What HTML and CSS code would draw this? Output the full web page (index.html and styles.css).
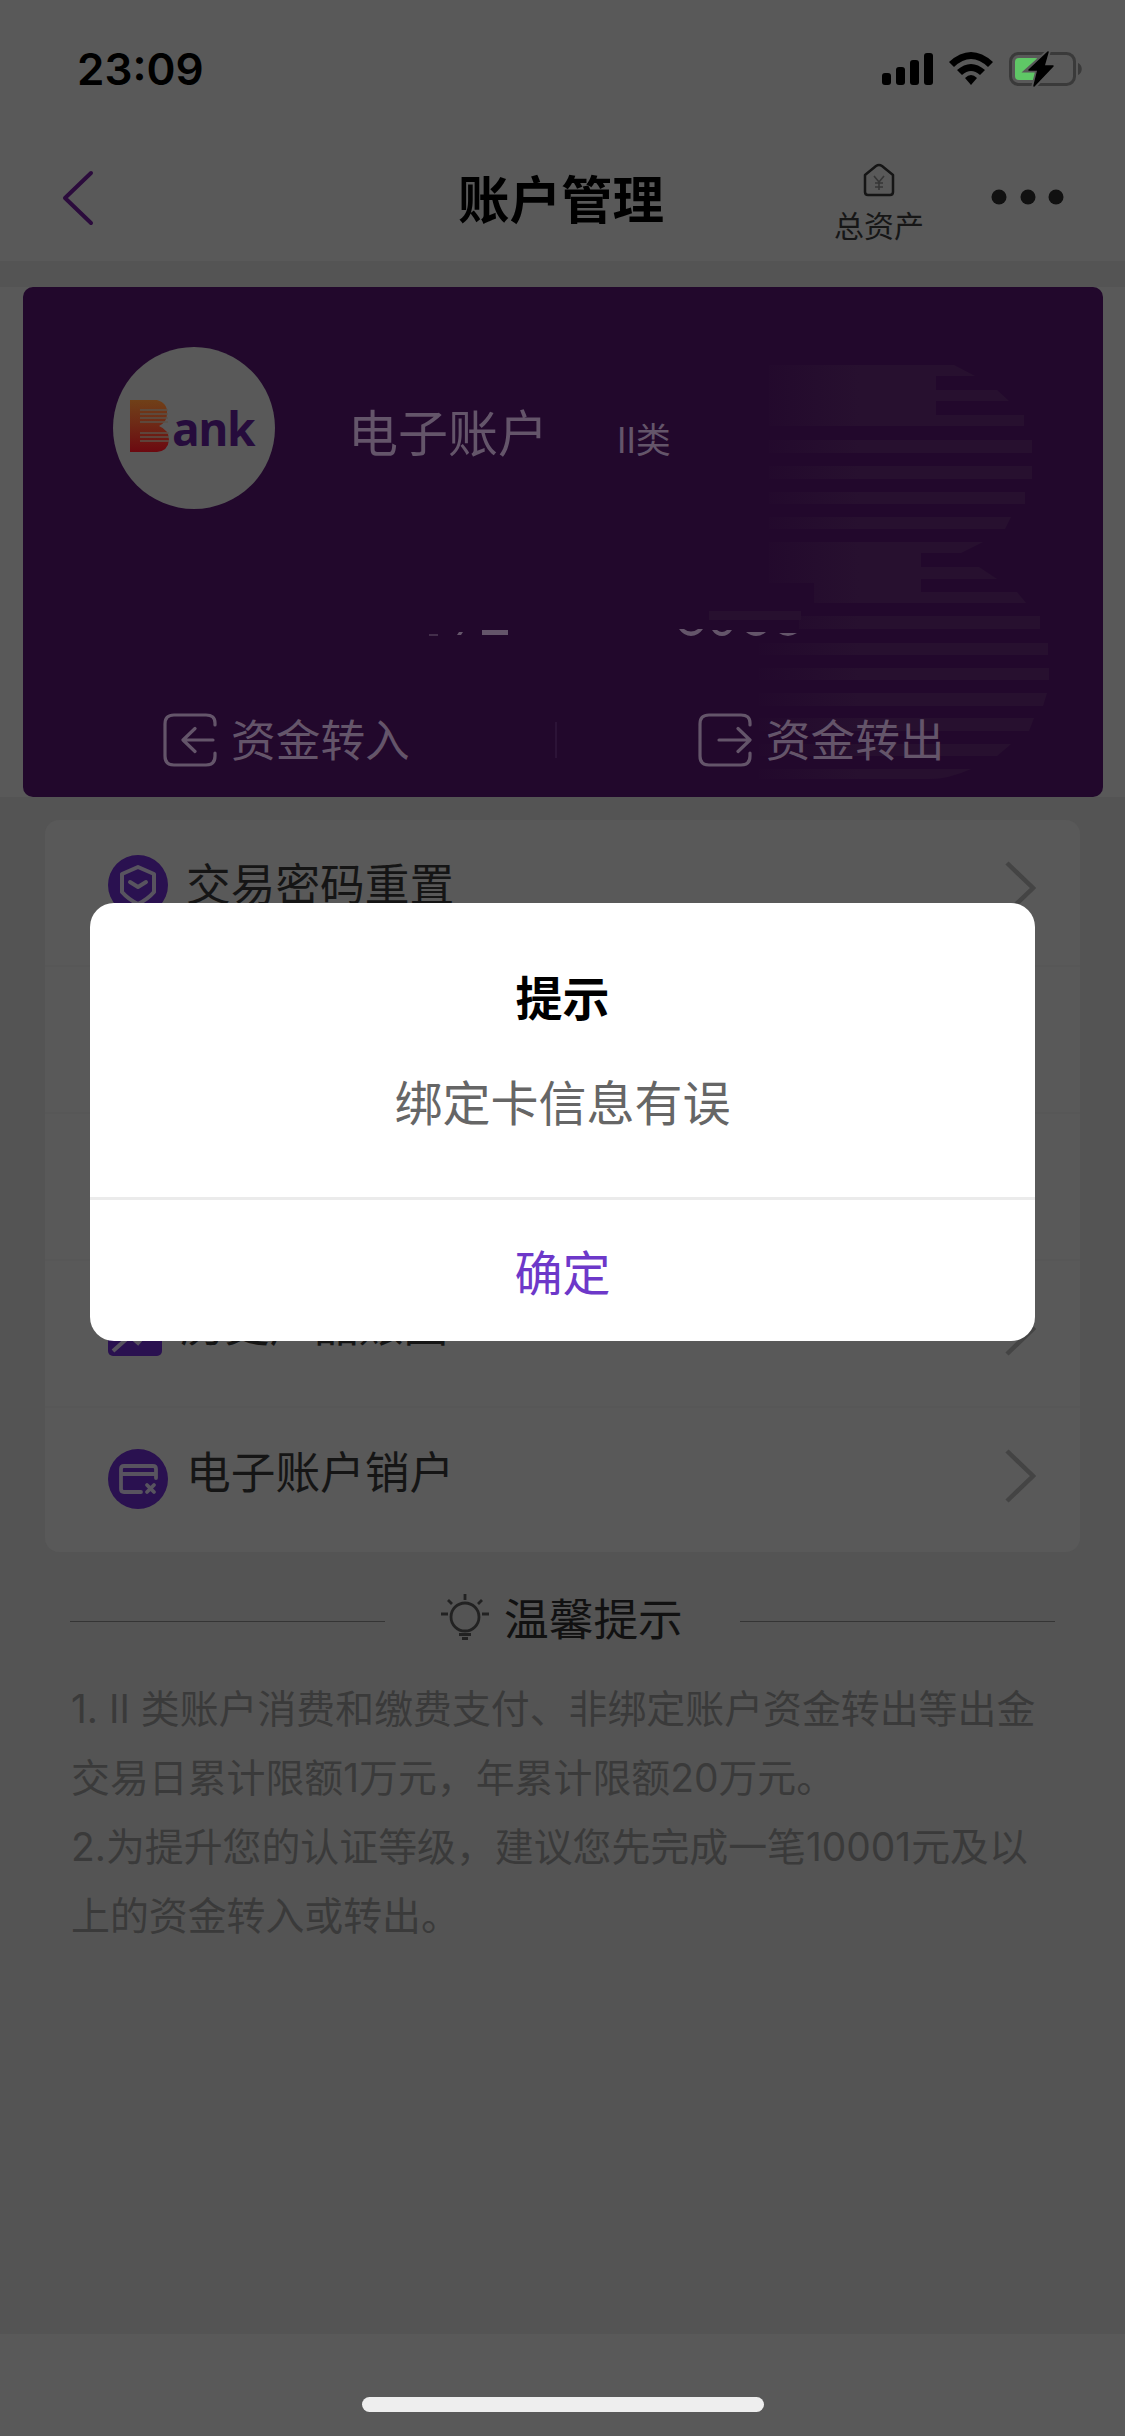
FILE: index.html
```html
<!DOCTYPE html>
<html lang="zh-CN">
<head>
<meta charset="utf-8">
<title>账户管理</title>
<link rel="stylesheet" href="styles.css">
</head>
<body>
<div class="screen">
  <div class="status">
    <span class="time">23:09</span>
    <svg class="signals" width="204" height="40" viewBox="0 0 204 40">
      <rect x="0" y="24" width="9" height="12" rx="3"/>
      <rect x="14" y="18" width="9" height="18" rx="3"/>
      <rect x="28" y="11" width="9" height="25" rx="3"/>
      <rect x="42" y="4" width="9" height="32" rx="3"/>
      <path d="M67 13 Q89 -7 111 13 L106 18 Q89 2 72 18Z"/>
      <path d="M75 21 Q89 9 103 21 L98 26 Q89 18 80 26Z"/>
      <path d="M83 29 Q89 23 95 29 L89 36Z"/>
      <rect x="128.5" y="4.500" width="64" height="31" rx="8" fill="none" stroke="#3a3a3a" stroke-width="3"/>
      <path d="M196 14c5 2 5 10 0 12Z" fill="#3a3a3a"/>
      <rect x="133" y="9" width="24" height="22" rx="4" fill="#5fc766"/>
      <path d="M166 3 L146 21 H156 L152 37 L172 17 H162Z" stroke="#595959" stroke-width="5"/>
      <path d="M166 3 L147 21 H156 L152 37 L171 17 H162Z" stroke="#000" stroke-width="1.500" stroke-linejoin="round"/>
    </svg>
  </div>
  <div class="nav">
    <svg class="back" width="34" height="56" viewBox="0 0 34 56"><path d="M30 3 L4 28 L30 53" fill="none" stroke="#2b0b3c" stroke-width="4" stroke-linecap="round" stroke-linejoin="round"/></svg>
    <h1 class="title">账户管理</h1>
    <div class="assets">
      <svg width="32" height="34" viewBox="0 0 32 34" fill="none" stroke="#151515" stroke-width="2.500" stroke-linejoin="round"><path d="M2 12 L13 3 Q16 1 19 3 L30 12 V29 Q30 32 27 32 H5 Q2 32 2 29Z"/><path d="M11 13 L16 19 L21 13 M16 19 V27 M12 20 H20 M12 24 H20" stroke="#363636" stroke-width="1.600"/></svg>
      <span>总资产</span>
    </div>
    <svg class="more" width="74" height="16" viewBox="0 0 74 16" fill="#111"><circle cx="8" cy="8" r="7.500"/><circle cx="37" cy="8" r="7.500"/><circle cx="65" cy="8" r="7.500"/></svg>
  </div>

  <div class="card-wrap">
    <div class="card">
      <svg class="mark" width="310" height="420" viewBox="0 0 310 420">
        <defs><linearGradient id="fade" gradientUnits="userSpaceOnUse" x1="0" x2="110" y1="0" y2="0"><stop offset="0" stop-color="#27102f" stop-opacity="0"/><stop offset="1" stop-color="#27102f"/></linearGradient></defs>
        <g fill="url(#fade)">
          <path d="M20 2 H205 L226 13 H187 V63 H20Z"/>
          <path d="M187 27 H248 L260 38 H187Z"/>
          <path d="M187 52 H275 V63 H187Z"/>
          <path d="M20 77 H283 V90 H20Z"/>
          <path d="M20 103 H283 V116 H20Z"/>
          <path d="M20 129 H276 V141 H20Z"/>
          <path d="M20 154 H262 L256 166 H20Z"/>
          <path d="M20 179 H234 L212 190 H172 V240 H65 V220 H20Z"/>
          <path d="M172 204 H230 L248 216 H172Z"/>
          <path d="M172 229 H268 L277 240 H172Z"/>
          <path d="M50 253 H291 V266 H50Z"/>
          <path d="M10 280 H299 V292 H10Z"/>
          <path d="M10 305 H300 V317 H10Z"/>
          <path d="M10 330 H298 L294 343 H10Z"/>
          <path d="M10 355 H285 L280 368 H10Z"/>
          <path d="M10 381 H262 L248 393 H10Z"/>
          <path d="M10 406 H222 Q200 416 180 416 H10Z"/>
        </g>
        <path d="M-40 248 H52 V257 H-40Z" fill="#27102f"/>
      </svg>
      <div class="owner">
        <div class="logo">
          <svg width="39" height="52" viewBox="0 0 39 52">
            <defs><linearGradient id="flame" x2="0" y2="1"><stop stop-color="#704018"/><stop offset=".45" stop-color="#6e2a16"/><stop offset="1" stop-color="#6c0910"/></linearGradient></defs>
            <path d="M0 0H27Q38 3 37 14Q37 22 29 26Q39 30 39 40Q38 51 27 52H0Z" fill="url(#flame)"/>
            <path d="M10 10H38 M10 14H38 M10 18H38 M10 22H38 M10 33H39 M10 37H39 M10 41H39" stroke="#595148" stroke-width="1.600"/>
          </svg>
          <span>ank</span>
        </div>
        <span class="name">电子账户</span>
        <span class="level">II类</span>
      </div>
      <svg class="masked" width="384" height="12" viewBox="0 0 384 12" fill="#64556a">
        <path d="M9 7.500 H18 V8.500 H9Z M37 8 L39 5 H43 L41 8Z M62 3 H88 V8 H62Z"/>
        <path d="M259 2 H264 Q271 7 278 2 H283 Q278 9 271 9 Q264 9 259 2Z"/>
        <path d="M292 3 H297 Q302 7 307 3 H312 Q308 9 302 9 Q296 9 292 3Z"/>
        <path d="M326 5 H346 Q341 9 336 9 Q331 9 326 5Z"/>
        <path d="M359 6 H377 Q372 9 368 9 Q363 9 359 6Z"/>
      </svg>
      <div class="actions">
        <div class="action">
          <svg width="54" height="54" viewBox="0 0 54 54"><path d="M52 12 V10 Q52 2 43 2 H11 Q2 2 2 11 V43 Q2 52 11 52 H43 Q52 52 52 43 V40 M50 27 H21 M32 15.500 L20 27 L32 38.500"/></svg>
          <span>资金转入</span>
        </div>
        <i class="split"></i>
        <div class="action">
          <svg width="54" height="54" viewBox="0 0 54 54"><path d="M52 12 V10 Q52 2 43 2 H11 Q2 2 2 11 V43 Q2 52 11 52 H43 Q52 52 52 43 V40 M21 27 H51 M40 15.500 L52 27 L40 38.500"/></svg>
          <span>资金转出</span>
        </div>
      </div>
    </div>
  </div>

  <div class="list">
    <div class="row first">
      <svg class="ico" width="60" height="60" viewBox="0 0 60 60"><circle cx="30" cy="30" r="30" fill="#2a1150"/><path d="M30 12 L46 19 V37 Q40 44 30 49 Q20 44 14 37 V19Z M22 27 L30 32 L38 27" fill="none" stroke="#58545f" stroke-width="4" stroke-linejoin="round" stroke-linecap="round"/></svg>
      <span>交易密码重置</span>
      <svg class="arrow" width="32" height="54" viewBox="0 0 32 54"><path d="M3 2 L29 27 L3 52"/></svg>
    </div>
    <div class="row"></div>
    <div class="row"></div>
    <div class="row fourth">
      <svg class="ico" width="54" height="54" viewBox="0 0 54 54"><rect width="54" height="54" rx="5" fill="#2a1150"/><path d="M5 49 L22 34 L30 41 L48 20" fill="none" stroke="#58545f" stroke-width="4"/></svg>
      <span>历史产品账图</span>
      <svg class="arrow" width="32" height="54" viewBox="0 0 32 54"><path d="M3 2 L29 27 L3 52"/></svg>
    </div>
    <div class="row last">
      <svg class="ico" width="60" height="60" viewBox="0 0 60 60"><circle cx="30" cy="30" r="30" fill="#2a1150"/><path d="M33 43 H16 Q13 43 13 40 V20 Q13 17 16 17 H45 Q48 17 48 20 V29 M14 25 H48 M39 36 L46 43 M46 36 L39 43" fill="none" stroke="#58545f" stroke-width="3.800" stroke-linecap="round"/></svg>
      <span>电子账户销户</span>
      <svg class="arrow" width="32" height="54" viewBox="0 0 32 54"><path d="M3 2 L29 27 L3 52"/></svg>
    </div>
  </div>

  <div class="tips-head">
    <i></i>
    <svg width="48" height="46" viewBox="0 0 48 46" fill="none" stroke="#222" stroke-width="2.800"><circle cx="24" cy="23" r="14"/><path d="M24 0 V6 M7 6 L11 10 M41 6 L37 10 M0 20 H7 M41 20 H48 M18 40.500 H30 M21 44.500 H27"/></svg>
    <h2>温馨提示</h2>
    <i></i>
  </div>
  <div class="tips">
    <p>1. II 类账户消费和缴费支付、非绑定账户资金转出等出金</p>
    <p>交易日累计限额1万元，年累计限额20万元。</p>
    <p>2.为提升您的认证等级，建议您先完成一笔10001元及以</p>
    <p>上的资金转入或转出。</p>
  </div>
  <div class="home"><i></i></div>

  <div class="dialog">
    <div class="dialog-body">
      <h3>提示</h3>
      <p>绑定卡信息有误</p>
    </div>
    <div class="confirm">确定</div>
  </div>
</div>
</body>
</html>
```

FILE: styles.css
```css
* { box-sizing: border-box; margin: 0; padding: 0; }
body { background: #545454; font-family: Inter, "Noto Sans CJK SC", sans-serif; color: #111; }
svg { display: block; flex: none; }
span, p, h1, h2, h3 { white-space: nowrap; }
.screen { position: relative; width: 1125px; height: 2436px; overflow: hidden; display: flex; flex-direction: column; background: #545454; }

.status { height: 132px; background: #595959; display: flex; justify-content: space-between; padding: 49px 39px 0 77px; }
.time { font: 600 44px/40px Inter, sans-serif; color: #000; }

.nav { height: 131px; background: #595959; display: flex; border-bottom: 2px solid #545454; padding-left: 61px; }
.back { margin-top: 38px; }
.title { margin-left: 363px; width: 210px; font-size: 51.500px; line-height: 60px; margin-top: 38px; color: #000; font-weight: 700; }
.assets { margin-left: 166px; width: 90px; display: flex; flex-direction: column; align-items: center; padding-top: 31px; }
.assets span { font-size: 30px; line-height: 40px; margin-top: 9px; color: #161616; }
.more { margin: 57px 0 0 67px; }

.card-wrap { margin-top: 24px; height: 510px; background: #595959; padding: 0 22px 0 23px; }
.card { position: relative; height: 510px; border-radius: 10px; background: #22082c; color: #64556a; overflow: hidden; }
.mark { position: absolute; left: 726px; top: 76px; overflow: visible; }
.owner { position: relative; display: flex; padding: 60px 0 0 90px; height: 222px; }
.logo { width: 162px; height: 162px; border-radius: 50%; background: #595959; display: flex; padding: 53px 0 0 17px; }
.logo span { font: 700 46px/52px "Open Sans", sans-serif; letter-spacing: -1.5px; color: #260c3c; margin: 2px 0 0 3px; }
.name { font-size: 50px; line-height: 60px; margin: 57px 0 0 73px; width: 200px; }
.level { font-size: 35px; line-height: 40px; margin: 73px 0 0 69px; }
.masked { position: relative; margin: 118px 0 0 397px; }
.actions { position: relative; display: flex; align-items: center; height: 54px; margin: 74px 0 0 140px; }
.action { display: flex; align-items: center; gap: 14px; font-size: 44.700px; line-height: 54px; }
.action span { margin-top: 2px; }
.action path { fill: none; stroke: #64556a; stroke-width: 3.200; stroke-linecap: round; stroke-linejoin: round; }
.split { width: 2px; height: 36px; background: #2c1337; margin: 0 141px 0 145px; }

.list { margin: 23px 45px 0; height: 732px; background: #595959; border-radius: 14px; }
.row { height: 147px; display: flex; padding: 35px 44px 0 63px; border-bottom: 2px solid #575757; font-size: 44.700px; line-height: 60px; }
.row span { flex: 1; margin-left: 18px; color: #151515; }
.arrow path { fill: none; stroke: #444; stroke-width: 4.500; }
.arrow { margin-top: 6px; }
.fourth { padding-top: 41px; }
.fourth span { margin: -6px 0 0 18px; }
.fourth .arrow { margin-top: 0; }
.last { border: 0; padding-top: 41px; }
.last span { margin-top: -6px; }
.last .arrow { margin-top: 0; }

.tips-head { display: flex; align-items: center; height: 60px; margin: 38px 69px 0 70px; }
.tips-head i { height: 1px; background: #353535; width: 315px; margin-top: 2px; }
.tips-head svg { margin: -6px 0 0 56px; }
.tips-head h2 { font-size: 44.700px; font-weight: 400; margin: 0 58px 0 15px; width: 178px; line-height: 60px; }
.tips { margin: 24px 0 0 71px; font-size: 38.900px; line-height: 69px; color: #3a3a3a; }
.home { margin-top: auto; height: 102px; background: #595959; display: flex; justify-content: center; padding-top: 63px; }
.home i { width: 402px; height: 15px; border-radius: 8px; background: #eee; }

.dialog { position: absolute; left: 90px; top: 903px; width: 945px; height: 438px; border-radius: 24px; background: #fff; text-align: center; }
.dialog-body { height: 297px; border-bottom: 3px solid #ebebeb; padding-top: 66px; }
.dialog h3 { font-size: 47px; line-height: 60px; color: #000; }
.dialog p { font-size: 48px; line-height: 60px; margin-top: 45px; color: #666; }
.confirm { font-size: 48px; line-height: 60px; padding-top: 44px; color: #6d38c9; }
```
